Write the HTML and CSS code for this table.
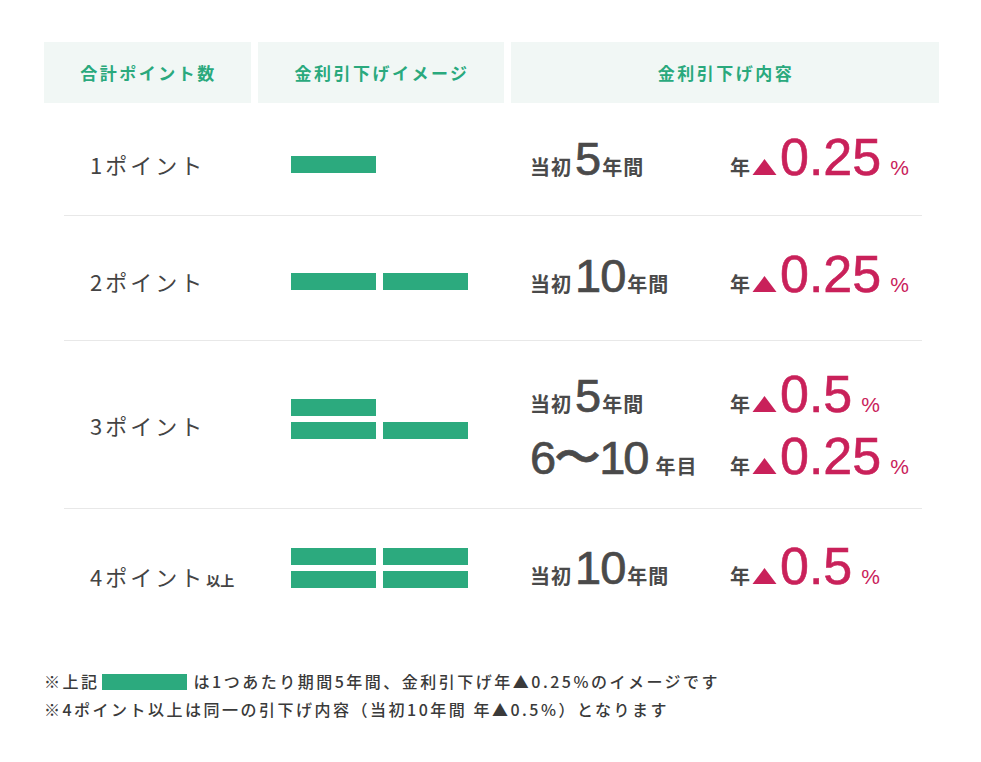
FILE: index.html
```html
<!DOCTYPE html>
<html lang="ja">
<head>
<meta charset="utf-8">
<link rel="stylesheet" href="styles.css">
</head>
<body>
<div class="page">
  <div class="head">
    <div class="hcell">合計ポイント数</div>
    <div class="hcell">金利引下げイメージ</div>
    <div class="hcell">金利引下げ内容</div>
  </div>

  <div class="row row-1">
    <div class="label">1ポイント</div>
    <div class="bars"><span class="bar"></span></div>
    <div class="rates">
      <div class="line">
        <div class="term">当初<span class="big">5</span>年間</div>
        <div class="rate">年<svg class="tri" viewBox="0 0 24 16"><polygon points="12,0 24,16 0,16"/></svg><span class="num">0.25</span><span class="pct">%</span></div>
      </div>
    </div>
  </div>

  <div class="row row-2">
    <div class="label">2ポイント</div>
    <div class="bars"><span class="bar"></span><span class="bar"></span></div>
    <div class="rates">
      <div class="line">
        <div class="term">当初<span class="big">10</span>年間</div>
        <div class="rate">年<svg class="tri" viewBox="0 0 24 16"><polygon points="12,0 24,16 0,16"/></svg><span class="num">0.25</span><span class="pct">%</span></div>
      </div>
    </div>
  </div>

  <div class="row row-3">
    <div class="label">3ポイント</div>
    <div class="bars"><span class="bar"></span><span class="bar blank"></span><span class="bar"></span><span class="bar"></span></div>
    <div class="rates">
      <div class="line">
        <div class="term">当初<span class="big">5</span>年間</div>
        <div class="rate">年<svg class="tri" viewBox="0 0 24 16"><polygon points="12,0 24,16 0,16"/></svg><span class="num">0.5</span><span class="pct">%</span></div>
      </div>
      <div class="line">
        <div class="term"><span class="big big-first">6〜10</span><span class="after">年目</span></div>
        <div class="rate">年<svg class="tri" viewBox="0 0 24 16"><polygon points="12,0 24,16 0,16"/></svg><span class="num">0.25</span><span class="pct">%</span></div>
      </div>
    </div>
  </div>

  <div class="row row-4">
    <div class="label">4ポイント<span class="small">以上</span></div>
    <div class="bars"><span class="bar"></span><span class="bar"></span><span class="bar"></span><span class="bar"></span></div>
    <div class="rates">
      <div class="line">
        <div class="term">当初<span class="big">10</span>年間</div>
        <div class="rate">年<svg class="tri" viewBox="0 0 24 16"><polygon points="12,0 24,16 0,16"/></svg><span class="num">0.5</span><span class="pct">%</span></div>
      </div>
    </div>
  </div>

  <div class="notes">
    <p class="note">※上記<span class="note-bar"></span>は1つあたり期間5年間、金利引下げ年▲0.25%のイメージです</p>
    <p class="note">※4ポイント以上は同一の引下げ内容（当初10年間 年▲0.5%）となります</p>
  </div>
</div>
</body>
</html>
```

FILE: styles.css
```css
* { box-sizing: border-box; }
html, body { margin: 0; padding: 0; background: #fff; }
body {
  font-family: "Noto Sans CJK JP", "Liberation Sans", sans-serif;
  color: #444;
}
.page {
  padding: 42px 0 0 44px;
  width: 939px;
}
.head {
  display: grid;
  grid-template-columns: 207px 246px 428px;
  column-gap: 7px;
  margin-bottom: 10px;
}
.hcell {
  height: 61px;
  background: #f1f7f5;
  color: #2aa97d;
  font-weight: 700;
  font-size: 17px;
  letter-spacing: 2.5px;
  display: flex;
  align-items: center;
  justify-content: center;
  padding-left: 2px;
}
.row {
  display: grid;
  grid-template-columns: 187px 246px 411px;
  column-gap: 7px;
  margin: 0 17px 0 20px;
  border-bottom: 1px solid #e8e8e8;
  align-items: center;
}
.row-1 { height: 103px; }
.row-2 { height: 125px; padding-top: 6px; }
.row-3 { height: 168px; }
.row-4 { height: 118px; border-bottom: none; }

.label {
  padding-left: 26px;
  font-size: 22px;
  font-weight: 400;
  letter-spacing: 3px;
  color: #444;
  white-space: nowrap;
}
.row-4 .label { padding-top: 16px; }
.label .small {
  font-size: 14px;
  font-weight: 700;
  letter-spacing: 0;
  margin-left: 1px;
}
.bars {
  display: grid;
  grid-template-columns: 85px 85px;
  gap: 6px 7px;
  padding-left: 33px;
}
.row-3 .bars { margin-bottom: 12px; }
.bar {
  display: block;
  height: 17px;
  background: #2caa7e;
}
.bar.blank { background: transparent; }

.rates {
  padding: 0 0 14px 19px;
  display: flex;
  flex-direction: column;
  gap: 2px;
}
.row-3 .rates { padding: 4px 0 0 19px; }
.row-4 .rates { padding: 0 0 4px 19px; }
.line {
  display: flex;
  align-items: baseline;
}
.term {
  width: 200px;
  font-size: 20px;
  font-weight: 700;
  letter-spacing: 1px;
  color: #4a4a4a;
  white-space: nowrap;
}
.big {
  font-family: "Liberation Sans", sans-serif;
  font-weight: 400;
  font-size: 47px;
  letter-spacing: -1px;
  margin: 0 2px 0 3px;
  color: #4a4a4a;
  -webkit-text-stroke: 0.7px #4a4a4a;
}
.big-first { margin-left: 0; letter-spacing: -2px; }
.after { margin-left: 6px; }
.rate {
  font-size: 20px;
  font-weight: 700;
  color: #4a4a4a;
  white-space: nowrap;
}
.tri {
  width: 25px;
  height: 16px;
  fill: #c9215a;
  margin: 0 3px 0 2px;
}
.num {
  font-family: "Liberation Sans", sans-serif;
  font-weight: 400;
  font-size: 52px;
  color: #c9215a;
  -webkit-text-stroke: 0.6px #c9215a;
}
.pct {
  font-family: "Liberation Sans", sans-serif;
  font-weight: 400;
  font-size: 21px;
  color: #c9215a;
  margin-left: 9px;
}

.notes {
  padding-top: 40px;
}
.note {
  margin: 0;
  font-size: 16px;
  line-height: 28px;
  font-weight: 500;
  letter-spacing: 2.5px;
  color: #3a3a3a;
}
.note-bar {
  display: inline-block;
  width: 85px;
  height: 16px;
  background: #2caa7e;
  vertical-align: -2px;
  margin: 0 7px 0 2px;
}
```
